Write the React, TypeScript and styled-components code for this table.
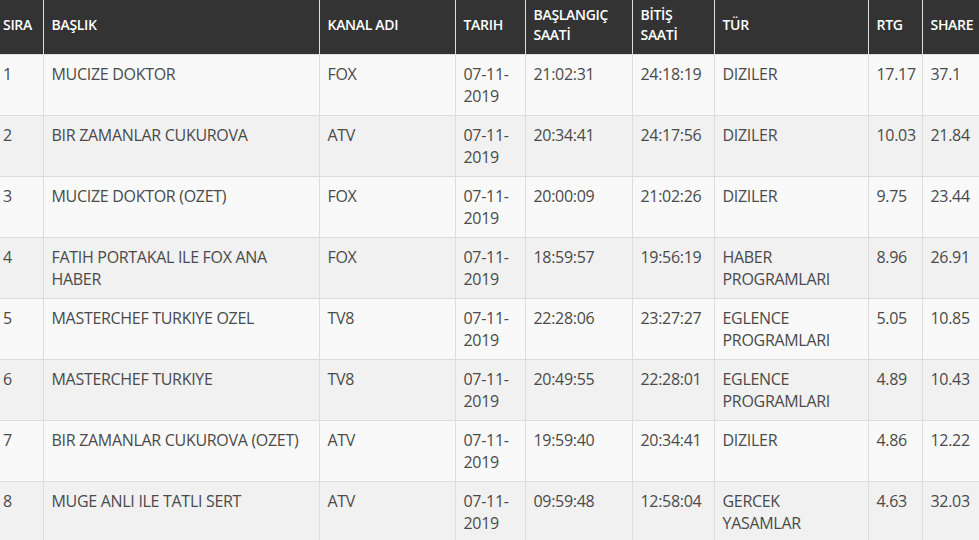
import React from "react";
import styled, { createGlobalStyle } from "styled-components";

const Global = createGlobalStyle`
  html, body { margin: 0; padding: 0; background: #ffffff; overflow: hidden; }
  body { font-family: "Open Sans", "DejaVu Sans", sans-serif; }
`;

const Wrap = styled.div`
  width: 979px;
  height: 540px;
  overflow: hidden;
`;

const Table = styled.table`
  border-collapse: collapse;
  table-layout: fixed;
  width: 1000px;
`;

const Th = styled.th`
  background: #333333;
  color: #ffffff;
  font-family: "Open Sans", sans-serif;
  font-weight: 600;
  font-size: 14px;
  line-height: 20px;
  letter-spacing: -0.3px;
  text-align: left;
  vertical-align: middle;
  padding: 5px 8px 9px;
  height: 40px;
  border-left: 1px solid #dddddd;
  border-bottom: 1px solid #dddddd;
  &:first-child { border-left: none; padding-left: 3px; }
`;

const Row = styled.tr<{ $alt: boolean }>`
  background: ${(p) => (p.$alt ? "#f1f1f1" : "#f9f9f9")};
`;

const Td = styled.td`
  color: #4a4a4a;
  font-family: "Open Sans", sans-serif;
  font-weight: 400;
  font-size: 16px;
  line-height: 22px;
  letter-spacing: -0.3px;
  vertical-align: top;
  padding: 8px 8px;
  height: 44px;
  border-left: 1px solid #dddddd;
  border-bottom: 1px solid #dddddd;
  &:first-child { border-left: none; padding-left: 3px; }
`;

const widths = [43, 276, 136, 70, 107, 82, 154, 54, 78];
const headers = ["SIRA", "BAŞLIK", "KANAL ADI", "TARIH", "BAŞLANGIÇ SAATİ", "BİTİŞ SAATİ", "TÜR", "RTG", "SHARE"];

const rows = [
  ["1", "MUCIZE DOKTOR", "FOX", "07-11-2019", "21:02:31", "24:18:19", "DIZILER", "17.17", "37.1"],
  ["2", "BIR ZAMANLAR CUKUROVA", "ATV", "07-11-2019", "20:34:41", "24:17:56", "DIZILER", "10.03", "21.84"],
  ["3", "MUCIZE DOKTOR (OZET)", "FOX", "07-11-2019", "20:00:09", "21:02:26", "DIZILER", "9.75", "23.44"],
  ["4", "FATIH PORTAKAL ILE FOX ANA HABER", "FOX", "07-11-2019", "18:59:57", "19:56:19", "HABER PROGRAMLARI", "8.96", "26.91"],
  ["5", "MASTERCHEF TURKIYE OZEL", "TV8", "07-11-2019", "22:28:06", "23:27:27", "EGLENCE PROGRAMLARI", "5.05", "10.85"],
  ["6", "MASTERCHEF TURKIYE", "TV8", "07-11-2019", "20:49:55", "22:28:01", "EGLENCE PROGRAMLARI", "4.89", "10.43"],
  ["7", "BIR ZAMANLAR CUKUROVA (OZET)", "ATV", "07-11-2019", "19:59:40", "20:34:41", "DIZILER", "4.86", "12.22"],
  ["8", "MUGE ANLI ILE TATLI SERT", "ATV", "07-11-2019", "09:59:48", "12:58:04", "GERCEK YASAMLAR", "4.63", "32.03"],
];

export default function App() {
  return (
    <Wrap>
      <Global />
      <Table>
        <colgroup>
          {widths.map((w, i) => (
            <col key={i} style={{ width: w }} />
          ))}
        </colgroup>
        <thead>
          <tr>
            {headers.map((h) => (
              <Th key={h}>{h}</Th>
            ))}
          </tr>
        </thead>
        <tbody>
          {rows.map((r, i) => (
            <Row key={i} $alt={i % 2 === 1}>
              {r.map((c, j) => (
                <Td key={j}>{c}</Td>
              ))}
            </Row>
          ))}
        </tbody>
      </Table>
    </Wrap>
  );
}
